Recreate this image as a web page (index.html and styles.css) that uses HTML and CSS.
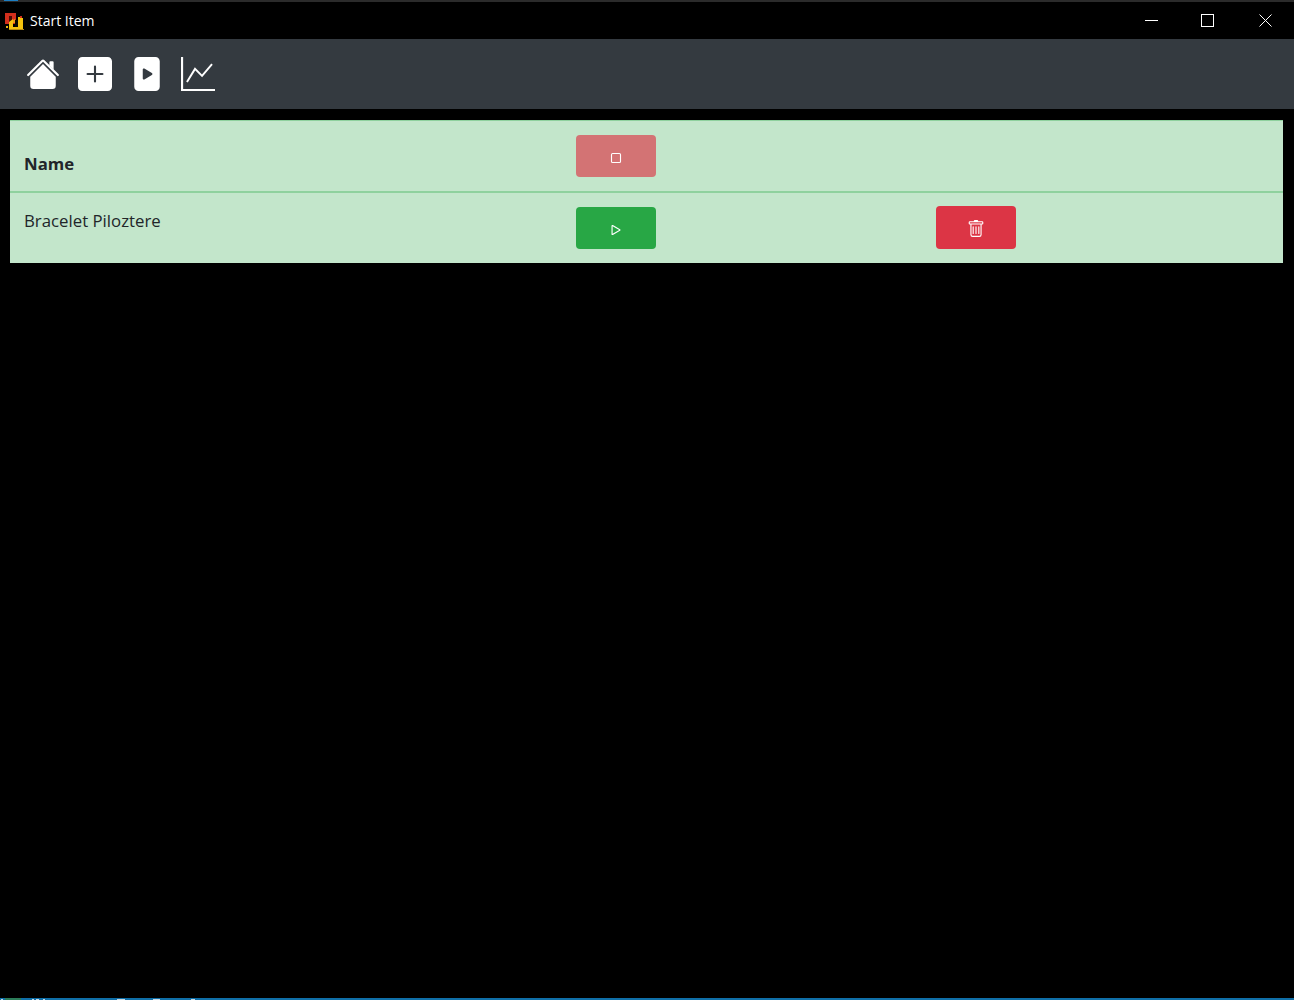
FILE: index.html
```html
<!DOCTYPE html>
<html lang="en">
<head>
  <title>Start Item</title>
  <meta charset="UTF-8">
  <meta name="viewport" content="width=device-width, initial-scale=1">
  <link rel="stylesheet" href="styles.css">
</head>
<body>
  <div class="window">
    <div class="top-edge"><span class="top-edge-tab"></span></div>

    <!-- Title bar -->
    <header class="titlebar">
      <div class="titlebar-left">
        <svg class="app-logo" viewBox="0 0 19 17" width="19" height="17">
          <path d="M0 0h11v11H7V3H4v8H0z" fill="#d22f1d"/>
          <rect x="4" y="3" width="3" height="8" fill="#4a0d05"/>
          <rect x="15" y="3" width="2" height="2" fill="#d22f1d"/>
          <rect x="1" y="13" width="2" height="2" fill="#e8b818"/>
          <path d="M4 9l4-3v8h5V4h2v1h3v12H4z" fill="#f4c20d"/>
          <path d="M8 7l2-1v4H8z" fill="#f09a10"/>
          <rect x="10" y="7" width="3" height="7" fill="#0a0800"/>
          <rect x="4" y="16" width="15" height="1" fill="#b88a10"/>
        </svg>
        <span class="app-title">Start Item</span>
      </div>
      <div class="window-controls">
        <div class="control">
          <svg viewBox="0 0 13 13" width="13" height="13"><path d="M0 6.5h13" stroke="#fff" stroke-width="1"/></svg>
        </div>
        <div class="control control-max">
          <svg viewBox="0 0 13 13" width="13" height="13"><rect x="0.5" y="0.5" width="12" height="12" fill="none" stroke="#fff" stroke-width="1"/></svg>
        </div>
        <div class="control">
          <svg viewBox="0 0 13 13" width="13" height="13"><path d="M0.5 0.5l12 12M12.5 0.5l-12 12" stroke="#fff" stroke-width="1"/></svg>
        </div>
      </div>
    </header>

    <!-- Toolbar -->
    <nav class="toolbar">
      <a class="tool" href="#">
        <svg viewBox="0 0 16 16" width="34" height="34" fill="#fff">
          <path fill-rule="evenodd" d="M8 3.293l6 6V13.5a1.5 1.5 0 0 1-1.5 1.5h-9A1.5 1.5 0 0 1 2 13.5V9.293l6-6zm5-.793V6l-2-2V2.5a.5.5 0 0 1 .5-.5h1a.5.5 0 0 1 .5.5z"/>
          <path fill-rule="evenodd" d="M7.293 1.5a1 1 0 0 1 1.414 0l6.647 6.646a.5.5 0 0 1-.708.708L8 2.207 1.354 8.854a.5.5 0 1 1-.708-.708L7.293 1.5z"/>
        </svg>
      </a>
      <a class="tool" href="#">
        <svg viewBox="0 0 16 16" width="34" height="34" fill="#fff">
          <path fill-rule="evenodd" d="M2 0a2 2 0 0 0-2 2v12a2 2 0 0 0 2 2h12a2 2 0 0 0 2-2V2a2 2 0 0 0-2-2H2zm6.5 4.5a.5.5 0 0 0-1 0v3h-3a.5.5 0 0 0 0 1h3v3a.5.5 0 0 0 1 0v-3h3a.5.5 0 0 0 0-1h-3v-3z"/>
        </svg>
      </a>
      <a class="tool" href="#">
        <svg viewBox="0 0 16 16" width="34" height="34" fill="#fff">
          <path fill-rule="evenodd" d="M12 0H4a2 2 0 0 0-2 2v12a2 2 0 0 0 2 2h8a2 2 0 0 0 2-2V2a2 2 0 0 0-2-2zM6 5.883a.5.5 0 0 1 .757-.429l3.528 2.117a.5.5 0 0 1 0 .858l-3.528 2.117a.5.5 0 0 1-.757-.43V5.884z"/>
        </svg>
      </a>
      <a class="tool tool-graph" href="#">
        <svg viewBox="0 0 16 16" width="34" height="34" fill="#fff">
          <path d="M0 0h1v16H0V0zm1 15h15v1H1v-1z"/>
          <path d="M2.8 11.8L6.6 5.6l3.3 3.3 4.7-5.6" fill="none" stroke="#fff" stroke-width="0.9"/>
        </svg>
      </a>
    </nav>

    <!-- Items -->
    <main class="content">
      <table class="items">
        <colgroup>
          <col class="col-name">
          <col class="col-run">
          <col>
        </colgroup>
        <thead>
          <tr>
            <th>Name</th>
            <td>
              <button class="btn btn-stop" disabled>
                <svg viewBox="0 0 16 16" width="18" height="18" fill="#fff">
                  <path fill-rule="evenodd" d="M3.5 5A1.5 1.5 0 0 1 5 3.5h6A1.5 1.5 0 0 1 12.5 5v6a1.5 1.5 0 0 1-1.5 1.5H5A1.5 1.5 0 0 1 3.5 11V5zM5 4.5a.5.5 0 0 0-.5.5v6a.5.5 0 0 0 .5.5h6a.5.5 0 0 0 .5-.5V5a.5.5 0 0 0-.5-.5H5z"/>
                </svg>
              </button>
            </td>
            <td></td>
          </tr>
        </thead>
        <tbody>
          <tr>
            <td class="item-name">Bracelet Piloztere</td>
            <td>
              <button class="btn btn-run">
                <svg viewBox="0 0 16 16" width="18" height="18" fill="#fff">
                  <path fill-rule="evenodd" d="M10.804 8L5 4.633v6.734L10.804 8zm.792-.696a.802.802 0 0 1 0 1.392l-6.363 3.692C4.713 12.69 4 12.345 4 11.692V4.308c0-.653.713-.998 1.233-.696l6.363 3.692z"/>
                </svg>
              </button>
            </td>
            <td class="delete-cell">
              <button class="btn btn-delete">
                <svg viewBox="0 0 16 16" width="18" height="18" fill="#fff">
                  <path d="M5.5 5.5A.5.5 0 0 1 6 6v6a.5.5 0 0 1-1 0V6a.5.5 0 0 1 .5-.5zm2.5 0a.5.5 0 0 1 .5.5v6a.5.5 0 0 1-1 0V6a.5.5 0 0 1 .5-.5zm3 .5a.5.5 0 0 0-1 0v6a.5.5 0 0 0 1 0V6z"/>
                  <path fill-rule="evenodd" d="M14.5 3a1 1 0 0 1-1 1H13v9a2 2 0 0 1-2 2H5a2 2 0 0 1-2-2V4h-.5a1 1 0 0 1-1-1V2a1 1 0 0 1 1-1H6a1 1 0 0 1 1-1h2a1 1 0 0 1 1 1h3.5a1 1 0 0 1 1 1v1zM4.118 4L4 4.059V13a1 1 0 0 0 1 1h6a1 1 0 0 0 1-1V4.059L11.882 4H4.118zM2.5 3V2h11v1h-11z"/>
                </svg>
              </button>
            </td>
          </tr>
        </tbody>
      </table>
    </main>

    <!-- Sliver of the desktop taskbar under the window -->
    <div class="taskbar">
      <span class="bit bit-start"></span>
      <span class="bit bit-app"></span>
      <span class="bit bit-a"></span>
      <span class="bit bit-b"></span>
      <span class="bit bit-c"></span>
      <span class="bit bit-d"></span>
      <span class="bit bit-e"></span>
      <span class="bit bit-f"></span>
    </div>
  </div>
</body>
</html>
```

FILE: styles.css
```css
html, body {
  margin: 0;
  padding: 0;
  background-color: #000;
}

body {
  font-family: "Open Sans", "Noto Sans", Arial, sans-serif;
  color: #212529;
}

.window {
  display: flex;
  flex-direction: column;
  height: 100vh;
  overflow: hidden;
}

.top-edge {
  height: 2px;
  padding-left: 4px;
  background-color: #2b2b2b;
}

.top-edge-tab {
  display: block;
  width: 14px;
  height: 1px;
  background-color: #1c7fc4;
}

.titlebar {
  display: flex;
  justify-content: space-between;
  align-items: center;
  height: 37px;
  background-color: #000;
}

.titlebar-left {
  display: flex;
  align-items: center;
  padding-left: 5px;
  gap: 6px;
}

.app-logo {
  margin-top: 1px;
}

.app-title {
  color: #fff;
  font-size: 14px;
}

.window-controls {
  display: flex;
}

.control {
  display: flex;
  justify-content: center;
  align-items: center;
  width: 57px;
  height: 37px;
}

.control-max svg {
  margin-right: 2px;
}

.toolbar {
  display: flex;
  align-items: center;
  gap: 18px;
  height: 70px;
  padding-left: 26px;
  background-color: #343a40;
}

.tool {
  display: block;
  width: 34px;
  height: 34px;
}

.tool-graph {
  margin-left: -1px;
}

.content {
  flex: 1;
  padding: 11px 11px 0 10px;
}

.items {
  width: 100%;
  table-layout: fixed;
  border-collapse: collapse;
  background-color: #c3e6cb;
}

.col-name {
  width: 552px;
}

.col-run {
  width: 360px;
}

.items th,
.items td {
  padding: 14px;
  text-align: left;
  font-size: 16.8px;
  line-height: 24px;
  border-top: 1px solid #8fd19e;
}

.items th {
  vertical-align: bottom;
  font-weight: 700;
  padding-bottom: 15px;
  border-bottom: 2px solid #8fd19e;
}

.items thead td {
  vertical-align: top;
  border-bottom: 2px solid #8fd19e;
}

.items tbody td {
  vertical-align: top;
  border-top: 0;
}

.items .item-name {
  padding-top: 16px;
  color: #212529;
}

.items .delete-cell {
  padding-top: 13px;
}

.btn {
  display: flex;
  justify-content: center;
  align-items: center;
  width: 80px;
  height: 42px;
  padding: 4px 0 0;
  border: 0;
  border-radius: 4px;
  cursor: pointer;
}

/* same colour as a disabled bootstrap danger button on this row, icon stays white */
.btn-stop {
  background-color: #d37374;
}

.btn-run {
  background-color: #28a745;
}

.btn-delete {
  height: 43px;
  padding-top: 3px;
  background-color: #dc3545;
}

.taskbar {
  display: flex;
  height: 2px;
  background-color: #0f6fa8;
}

.bit {
  display: block;
  height: 1px;
  margin-top: 1px;
  background-color: #c8d8e2;
}

.bit-start {
  width: 2px;
  margin-left: 1px;
}

.bit-app {
  width: 16px;
  height: 2px;
  margin-top: 0;
  margin-left: 2px;
  background-color: #2c7d5a;
}

.bit-a {
  width: 2px;
  margin-left: 11px;
}

.bit-b {
  width: 3px;
  margin-left: 2px;
}

.bit-c {
  width: 2px;
  margin-left: 4px;
}

.bit-d {
  width: 8px;
  margin-left: 72px;
}

.bit-e {
  width: 7px;
  margin-left: 28px;
}

.bit-f {
  width: 4px;
  margin-left: 31px;
}
```
